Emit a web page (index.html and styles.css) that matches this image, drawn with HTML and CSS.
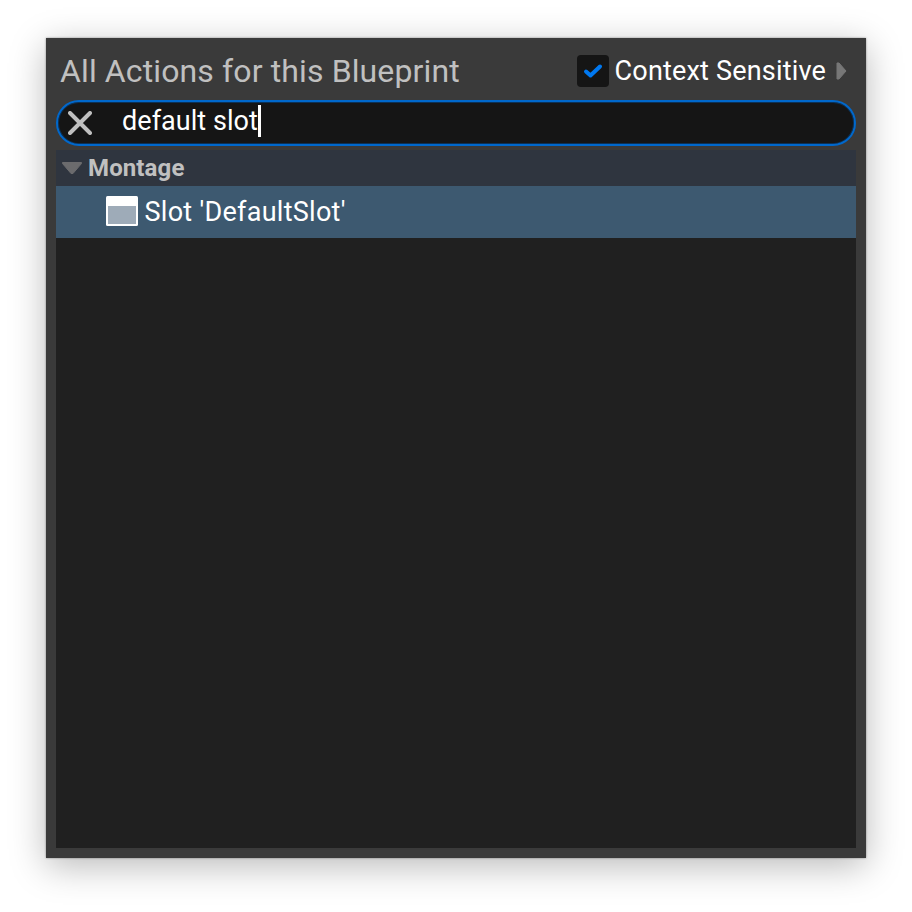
FILE: index.html
```html
<!DOCTYPE html>
<html lang="en">
<head>
<meta charset="utf-8">
<title>Blueprint Actions</title>
<link rel="stylesheet" href="styles.css">
</head>
<body>
<main class="panel">
  <header class="header">
    <h1 class="title">All Actions for this Blueprint</h1>
    <div class="context">
      <span class="checkbox"><svg width="32" height="32" viewBox="0 0 32 32"><path d="M9 16.500l4.500 4L23 11.500" fill="none" stroke="#0078f0" stroke-width="4" stroke-linecap="round" stroke-linejoin="round"/></svg></span>
      <span class="context-label">Context Sensitive</span>
      <svg class="expander" width="11" height="18" viewBox="0 0 11 18"><path d="M1 1h2l7 8-7 8H1z" fill="#777" stroke="#777" stroke-linejoin="round"/></svg>
    </div>
  </header>
  <div class="search">
    <svg class="clear" width="24" height="24" viewBox="0 0 24 24"><path d="M2 2l20 20M22 2L2 22" fill="none" stroke="#c0c0c0" stroke-width="4" stroke-linecap="round"/></svg>
    <span class="query">default slot</span><span class="caret"></span>
  </div>
  <section class="tree">
    <div class="category">
      <svg class="arrow" width="20" height="12" viewBox="0 0 20 12"><path d="M.5 .5h19v1L11 11.500H9L.5 1.500z" fill="#6b6b6d" stroke="#6b6b6d" stroke-linejoin="round"/></svg>
      <span class="category-label">Montage</span>
    </div>
    <div class="item">
      <svg class="node-icon" width="32" height="30" viewBox="0 0 32 30"><rect width="32" height="30" rx="1.500" fill="#fff"/><path d="M2 10h28v18H2z" fill="#9eabb8"/></svg>
      <span class="item-label">Slot 'DefaultSlot'</span>
    </div>
  </section>
</main>
</body>
</html>
```
FILE: styles.css
```css
body { margin: 0; background: #fff; font-family: Roboto, sans-serif; }
.panel {
  box-sizing: border-box;
  display: flex;
  flex-direction: column;
  width: 820px;
  height: 820px;
  margin: 38px 46px 54px;
  padding: 0 10px 10px;
  background: #3a3a3a;
  box-shadow: 0 8px 34px rgba(0, 0, 0, .28), 0 0 2px rgba(0, 0, 0, .4);
}
.header {
  display: flex;
  justify-content: space-between;
  height: 62px;
  padding: 0 9px 0 4px;
}
.title { margin: 0; font-size: 32px; font-weight: 400; line-height: 66px; letter-spacing: .12px; color: #c0c0c0; }
.context { display: flex; align-items: center; height: 66px; }
.checkbox { width: 32px; height: 32px; margin-right: 6px; background: #151515; border-radius: 4px; }
.checkbox svg { display: block; }
.context-label { font-size: 27px; letter-spacing: .18px; color: #fff; white-space: nowrap; }
.expander { margin-left: 10px; }
.search {
  box-sizing: border-box;
  display: flex;
  align-items: center;
  height: 46px;
  padding-left: 10px;
  border: 2px solid #0068cc;
  border-radius: 23px;
  box-shadow: inset 0 0 0 1px #0c3156;
  background: #151515;
}
.clear { margin-right: 30px; }
.query { font-size: 27px; line-height: 38px; padding-bottom: 4px; letter-spacing: .05px; color: #fff; }
.caret { width: 3px; height: 32px; margin-bottom: 4px; background: #fff; }
.tree { flex: 1; margin-top: 4px; background: #202020; }
.category { display: flex; align-items: center; height: 36px; padding-left: 6px; background: #2f353f; }
.category-label { margin-left: 6px; font-size: 24px; font-weight: 700; letter-spacing: .12px; color: #c0c0c0; }
.item { display: flex; align-items: center; height: 52px; padding-left: 50px; background: #3d5970; }
.node-icon { margin-bottom: 2px; }
.item-label { margin-left: 6.500px; font-size: 27px; letter-spacing: .28px; color: #fff; }
```
